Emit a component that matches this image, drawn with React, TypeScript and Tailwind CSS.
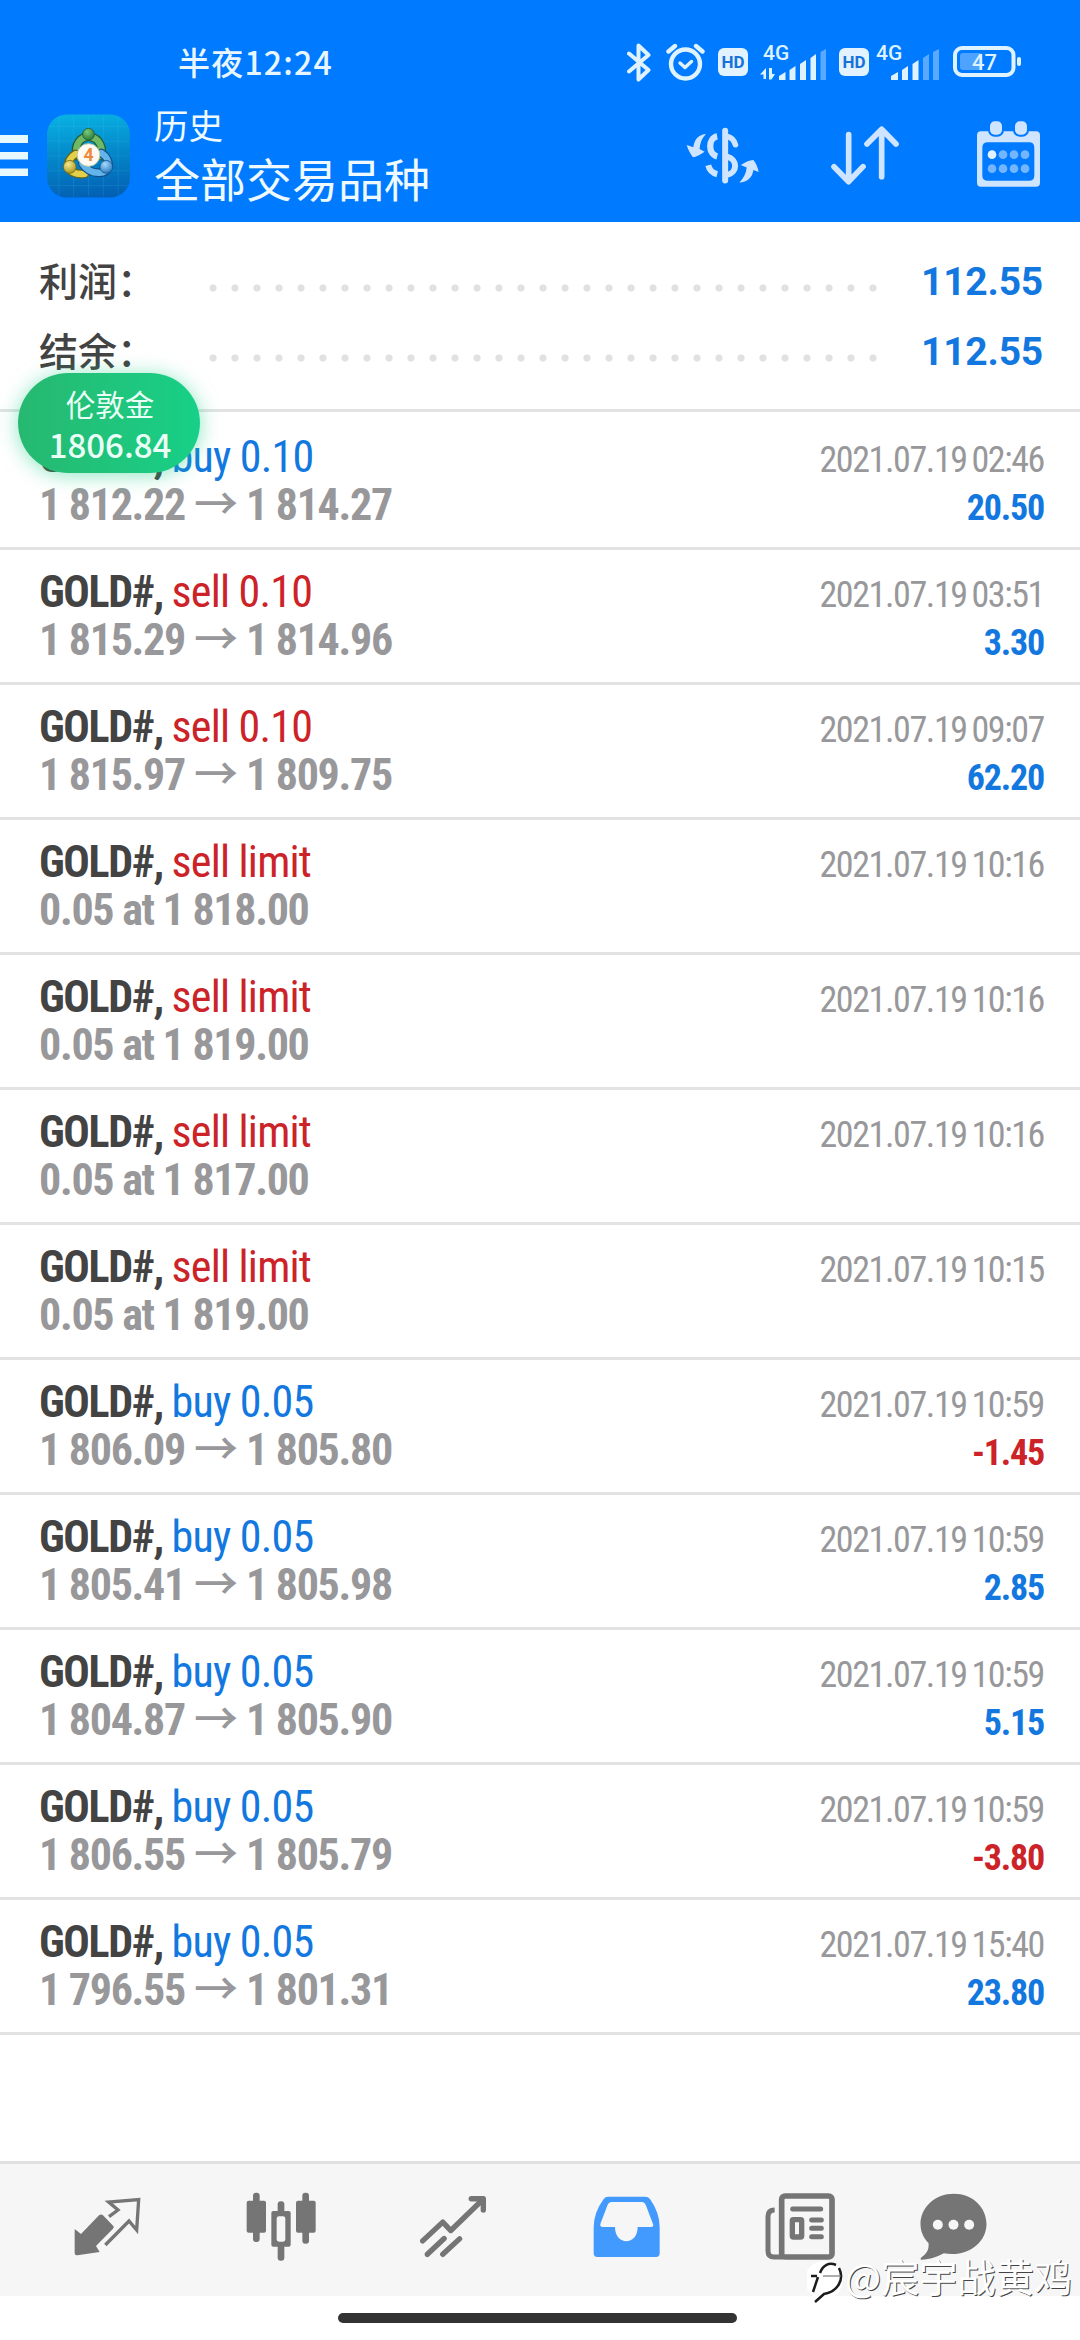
import { clsx } from 'clsx'

type Side = 'buy' | 'sell'

interface Deal {
  side: Side
  volume: string
  from?: string
  to?: string
  order?: string
  time: string
  profit?: string
}

const DEALS: Deal[] = [
  { side: 'buy', volume: '0.10', from: '1 812.22', to: '1 814.27', time: '2021.07.19 02:46', profit: '20.50' },
  { side: 'sell', volume: '0.10', from: '1 815.29', to: '1 814.96', time: '2021.07.19 03:51', profit: '3.30' },
  { side: 'sell', volume: '0.10', from: '1 815.97', to: '1 809.75', time: '2021.07.19 09:07', profit: '62.20' },
  { side: 'sell', volume: 'limit', order: '0.05 at 1 818.00', time: '2021.07.19 10:16' },
  { side: 'sell', volume: 'limit', order: '0.05 at 1 819.00', time: '2021.07.19 10:16' },
  { side: 'sell', volume: 'limit', order: '0.05 at 1 817.00', time: '2021.07.19 10:16' },
  { side: 'sell', volume: 'limit', order: '0.05 at 1 819.00', time: '2021.07.19 10:15' },
  { side: 'buy', volume: '0.05', from: '1 806.09', to: '1 805.80', time: '2021.07.19 10:59', profit: '-1.45' },
  { side: 'buy', volume: '0.05', from: '1 805.41', to: '1 805.98', time: '2021.07.19 10:59', profit: '2.85' },
  { side: 'buy', volume: '0.05', from: '1 804.87', to: '1 805.90', time: '2021.07.19 10:59', profit: '5.15' },
  { side: 'buy', volume: '0.05', from: '1 806.55', to: '1 805.79', time: '2021.07.19 10:59', profit: '-3.80' },
  { side: 'buy', volume: '0.05', from: '1 796.55', to: '1 801.31', time: '2021.07.19 15:40', profit: '23.80' },
]

const SUMMARY = [
  { label: '利润：', value: '112.55' },
  { label: '结余：', value: '112.55' },
]

function HdBadge({ className }: { className?: string }) {
  return (
    <span
      className={clsx(
        'flex h-[28px] w-[30px] items-center justify-center rounded-[6px] bg-[#e2f2ff] text-[17px] leading-none font-bold text-[#1673d8] font-[Roboto,sans-serif]',
        className
      )}
    >
      HD
    </span>
  )
}

function StatusBar() {
  return (
    <div className="flex h-[84px] items-center justify-between pt-[40px] pr-[59px] pl-[178px]">
      <span className="-mt-[3px] text-[32px] leading-[44px] font-medium tracking-[1.2px] whitespace-nowrap text-[#e8f6ff] font-[Noto_Sans_CJK_SC,sans-serif]">
        半夜12:24
      </span>
      <div className="flex items-center text-[#dff3ff]">
        <svg width="24" height="39" viewBox="0 0 24 39" fill="none" stroke="currentColor" strokeWidth="4" strokeLinejoin="round" strokeLinecap="round">
          <path d="M2 10.500 L21.500 27 L11.500 36.500 V2.500 L21.500 12 L2 28.500" />
        </svg>
        <svg className="ml-[15px]" width="39" height="38" viewBox="0 0 39 38" fill="none" stroke="currentColor" strokeWidth="4.400" strokeLinecap="round">
          <circle cx="19.500" cy="21" r="14.500" />
          <path d="M14 20 L19 24.500 L25.500 18.500" strokeWidth="3.400" strokeLinejoin="round" />
          <path d="M2.500 8.500 L9 3 M36.500 8.500 L30 3" />
        </svg>
        <HdBadge className="ml-[13px]" />
        <svg className="ml-[12px] overflow-visible" width="67" height="38" viewBox="0 0 67 38" fill="currentColor">
          <text x="3" y="17" fontSize="21" fontFamily="Roboto, sans-serif" fontWeight="500">4G</text>
          <path d="M6 36 V25 L0 31.500 H3.500 V36 Z M9 25 V36.500 H11.500 L15 31 H12 V25 Z" />
          <path d="M19 37 V33 L25.500 29 V37 Z M29.500 37 V27 L35.500 23 V37 Z M40 37 V21 L46 17 V37 Z M50.500 37 V15 L56 11 V37 Z" />
          <path d="M60.500 37 V9 L66 6 V37 Z" opacity="0.4" />
        </svg>
        <HdBadge className="ml-[12px]" />
        <svg className="ml-[7px] overflow-visible" width="63" height="38" viewBox="0 0 63 38" fill="currentColor">
          <text x="0" y="17" fontSize="21" fontFamily="Roboto, sans-serif" fontWeight="500">4G</text>
          <path d="M15 37 V33 L22 29 V37 Z M26 37 V27 L32 23 V37 Z M36.500 37 V21 L42.500 17 V37 Z" />
          <path d="M47 37 V15 L53 11 V37 Z M57 37 V9 L63 6 V37 Z" opacity="0.4" />
        </svg>
        <svg className="ml-[14px]" width="68" height="32" viewBox="0 0 68 32">
          <rect x="2" y="2" width="58.500" height="27" rx="7" fill="none" stroke="currentColor" strokeWidth="4" />
          <rect x="7" y="7" width="22" height="17" rx="3" fill="#4da3ff" />
          <rect x="64" y="11" width="4" height="9" rx="2" fill="currentColor" />
          <text x="31.500" y="23.500" textAnchor="middle" fontSize="22" fontFamily="Roboto, sans-serif" fontWeight="500" fill="currentColor">47</text>
        </svg>
      </div>
    </div>
  )
}

// Three interlocked figures around the version number
function AppLogo() {
  return (
    <svg className="mt-[1px] ml-[19px]" width="83" height="84" viewBox="0 0 84 84">
      <defs>
        <linearGradient id="logo-bg" x1="0.4" y1="0" x2="0.5" y2="1">
          <stop offset="0" stopColor="#08b0e2" />
          <stop offset="0.5" stopColor="#0486c8" />
          <stop offset="1" stopColor="#0360b4" />
        </linearGradient>
        <radialGradient id="logo-green" cx="0.4" cy="0.3" r="0.8">
          <stop offset="0" stopColor="#7ccb76" />
          <stop offset="1" stopColor="#1f6f38" />
        </radialGradient>
        <radialGradient id="logo-yellow" cx="0.4" cy="0.3" r="0.8">
          <stop offset="0" stopColor="#f5e98a" />
          <stop offset="1" stopColor="#a08c16" />
        </radialGradient>
        <radialGradient id="logo-blue" cx="0.4" cy="0.3" r="0.8">
          <stop offset="0" stopColor="#a6dafb" />
          <stop offset="1" stopColor="#1a6fb8" />
        </radialGradient>
      </defs>
      <rect width="84" height="84" rx="20" fill="url(#logo-bg)" />
      <path d="M12 2 V82 M27 1 V83 M42 1 V83 M57 1 V83 M72 2 V82 M2 12 H82 M1 27 H83 M1 42 H83 M1 57 H83 M2 72 H82" stroke="#5fd0f5" strokeOpacity="0.14" fill="none" />
      <g fill="none" strokeLinecap="round">
        <path d="M30 42 C25 16 59 16 55 42" stroke="#245c30" strokeWidth="9" />
        <path d="M30 42 C25 16 59 16 55 42" stroke="#6db966" strokeWidth="6.500" />
        <path d="M29 40 C18 46 18 62 38 60" stroke="#6b6414" strokeWidth="9" />
        <path d="M29 40 C18 46 18 62 38 60" stroke="#e2d04a" strokeWidth="6.500" />
        <path d="M55 39 C66 46 64 60 52 59 C46 59 40 56 36 50" stroke="#12508c" strokeWidth="9" />
        <path d="M55 39 C66 46 64 60 52 59 C46 59 40 56 36 50" stroke="#62b4ea" strokeWidth="6.500" />
      </g>
      <circle cx="42" cy="20" r="6" fill="url(#logo-green)" stroke="#245c30" strokeWidth="0.800" />
      <circle cx="23" cy="53" r="6.500" fill="url(#logo-yellow)" stroke="#6b6414" strokeWidth="0.800" />
      <circle cx="60" cy="53" r="6.500" fill="url(#logo-blue)" stroke="#12508c" strokeWidth="0.800" />
      <circle cx="42" cy="41" r="11.500" fill="#fffaf3" stroke="#b9c9a0" strokeWidth="1" />
      <text x="42" y="47.500" textAnchor="middle" fontSize="18" fontWeight="700" fontFamily="Roboto, sans-serif" fill="#ef8a3c">4</text>
    </svg>
  )
}

function Toolbar() {
  return (
    <div className="flex h-[138px] items-center pt-[5px] pr-[40px]">
      <svg width="28" height="42" viewBox="0 0 28 42" fill="#e8f8ff">
        <rect width="28" height="8" />
        <rect y="17" width="28" height="7.500" />
        <rect y="33.500" width="28" height="7.500" />
      </svg>
      <AppLogo />
      <div className="-mt-[4px] ml-[24px] whitespace-nowrap text-[#eefaff] font-[Noto_Sans_CJK_SC,sans-serif]">
        <div className="text-[34.500px] leading-[48px]">历史</div>
        <div className="text-[46px] leading-[59px]">全部交易品种</div>
      </div>
      <div className="ml-auto flex items-center text-[#cfe5ff]">
        <svg width="73" height="58" viewBox="76 78 220 172" fill="none" stroke="currentColor" strokeLinecap="round">
          <path d="M194 88 V238" strokeWidth="18" />
          <path d="M170 105 C142 110 142 158 170 165" strokeWidth="19" strokeLinecap="butt" />
          <path d="M143 192 C147 208 154 215 170 219" strokeWidth="18" strokeLinecap="butt" />
          <path d="M200 105 C214 108 221 115 225 130" strokeWidth="17" />
          <path d="M200 166 C232 174 232 214 200 221" strokeWidth="18" />
          <path d="M136 98 C118 99 102 110 98 138 L78 131 C82 146 90 158 97 168 C106 166 120 160 132 151 L117 143 C118 126 124 110 136 98 Z" fill="currentColor" stroke="none" />
          <path d="M237 244 C260 243 276 229 279 206 L295 212 C292 196 286 184 279 176 C266 177 254 183 241 191 L259 199 C257 218 249 232 237 244 Z" fill="currentColor" stroke="none" />
        </svg>
        <svg className="ml-[72px]" width="68" height="60" viewBox="513 78 204 180" fill="none" stroke="currentColor" strokeWidth="17" strokeLinecap="round" strokeLinejoin="round">
          <path d="M566 104 V244 M522 200 L566 245 L609 200" />
          <path d="M665 230 V90 M621 132 L665 88 L708 132" />
        </svg>
        <svg className="-mt-[3px] ml-[78px]" width="63" height="66" viewBox="951 65 189 198" fill="currentColor">
          <path fillRule="evenodd" d="M963 96 H1128 Q1140 96 1140 108 V250 Q1140 262 1128 262 H963 Q951 262 951 250 V108 Q951 96 963 96 Z M984 129 Q967 129 967 145 V229 Q967 244 984 244 H1107 Q1123 244 1123 229 V145 Q1123 129 1107 129 Z" />
          <rect x="990" y="66" width="36" height="40" rx="14" stroke="#007aff" strokeWidth="12" paintOrder="stroke" />
          <rect x="1065" y="66" width="36" height="40" rx="14" stroke="#007aff" strokeWidth="12" paintOrder="stroke" />
          <circle cx="996" cy="166" r="13" fill="#e4f3ff" />
          <g fill="#73b5ff">
            <circle cx="1029" cy="166" r="13" />
            <circle cx="1062" cy="166" r="13" />
            <circle cx="1095" cy="166" r="13" />
            <circle cx="996" cy="208" r="13" />
            <circle cx="1029" cy="208" r="13" />
            <circle cx="1062" cy="208" r="13" />
            <circle cx="1095" cy="208" r="13" />
          </g>
        </svg>
      </div>
    </div>
  )
}

function DealRow({ deal }: { deal: Deal }) {
  const loss = deal.profit?.startsWith('-')

  return (
    <div className="flex h-[135px] justify-between border-b-[3px] border-[#e3e3e4] pt-[18px] pr-[36px] pl-[39px] whitespace-nowrap font-[Roboto_Condensed,Noto_Sans_CJK_SC,sans-serif]">
      <div className="text-[44px] leading-[48px]">
        <div>
          <span className="font-bold tracking-[-1.4px] text-[#434344]">GOLD#, </span>
          <span className={clsx('tracking-[-0.8px]', deal.side === 'buy' ? 'text-[#1278e0]' : 'text-[#cb2328]')}>
            {deal.side} {deal.volume}
          </span>
        </div>
        <div className="flex font-bold tracking-[-1.3px] text-[#98989b]">
          {deal.order ?? (
            <>
              <span>{deal.from}</span>
              <span className="-mt-[4px] mr-[8px] ml-[9px] font-medium tracking-normal font-[Noto_Sans_CJK_SC,sans-serif]">→</span>
              <span>{deal.to}</span>
            </>
          )}
        </div>
      </div>
      <div className="pt-[3px] text-right text-[36px] leading-[48px] tracking-[-1.2px]">
        <div className="tracking-[-1.4px] text-[#98989b] [word-spacing:-2px]">{deal.time}</div>
        <div className={clsx('font-bold', loss ? 'text-[#cb2328]' : 'text-[#1278e0]')}>{deal.profit}</div>
      </div>
    </div>
  )
}

function TabBar() {
  return (
    <div className="flex h-[135px] items-center border-t-[3px] border-[#e0e0e0] bg-[#f6f6f6] pb-[7px] pl-[21px] text-[#757575]">
      <div className="flex w-[173px] justify-center">
        <svg width="67" height="60" viewBox="76 56 201 180" fill="currentColor">
          <path d="M78 152 L97 167 L151 111 Q157 106 163 111 L194 143 Q197 147 193 151 L142 203 L153 221 L86 231 Q78 232 78 224 Z" />
          <path d="M181 115 L208 95 L180 71 L270 64 L264 155 L241 128 L170 200" fill="none" stroke="currentColor" strokeWidth="10" />
        </svg>
      </div>
      <div className="flex w-[173px] justify-center">
        <svg width="70" height="69" viewBox="588 40 210 207" fill="currentColor">
          <rect x="609" y="42" width="20" height="148" rx="9" />
          <rect x="590" y="66" width="58" height="96" rx="6" />
          <rect x="757" y="42" width="20" height="153" rx="9" />
          <rect x="738" y="66" width="59" height="96" rx="6" />
          <rect x="683" y="68" width="20" height="178" rx="9" />
          <rect x="664" y="97" width="58" height="107" rx="6" />
          <rect x="680" y="113" width="26" height="76" rx="7" fill="#f6f6f6" />
        </svg>
      </div>
      <div className="flex w-[173px] justify-center">
        <svg width="67" height="63" viewBox="64 47 200 188" fill="none" stroke="currentColor" strokeWidth="16" strokeLinejoin="round" strokeLinecap="round">
          <path d="M72 184 L132 128 L156 153 L250 62" />
          <path d="M217 58 H253 V92" />
          <path d="M86 224 L136 177 M132 224 L182 178" />
        </svg>
      </div>
      <div className="flex w-[173px] justify-center text-[#429aff]">
        <svg width="67" height="62" viewBox="582 48 201 186" fill="currentColor">
          <path fillRule="evenodd" d="M628 50 H738 Q748 50 753 57 Q782 98 782 142 V220 Q782 231 771 231 H595 Q584 231 584 220 V142 Q584 98 614 57 Q619 50 628 50 Z M637 66 Q629 66 626 74 L604 132 Q602 141 612 141 H648 C648 198 716 198 716 141 H756 Q765 141 762 132 L740 74 Q737 66 729 66 Z" />
        </svg>
      </div>
      <div className="flex w-[173px] justify-center">
        <svg width="70" height="67" viewBox="49 40 210 201" fill="none" stroke="currentColor" strokeWidth="15">
          <rect x="99" y="49" width="151" height="183" rx="10" strokeWidth="17" />
          <path d="M78 91 Q58 91 58 110 V214 Q58 232 76 232 H104" />
          <path d="M132 88 H216 M189 121 H218 M189 146 H218 M189 171 H218" strokeLinecap="round" />
          <rect x="131" y="120" width="28" height="52" rx="3" strokeWidth="16" />
        </svg>
      </div>
      <div className="flex w-[134px] justify-center">
        <svg width="67" height="67" viewBox="509 40 200 201" fill="currentColor">
          <path d="M610 42 C665 42 708 82 708 133 C708 190 650 234 580 221 C560 232 538 240 514 240 C508 240 510 236 514 232 C530 220 536 208 534 190 C518 174 510 154 510 133 C510 82 555 42 610 42 Z" />
          <g fill="#f6f6f6">
            <circle cx="562" cy="135" r="15" />
            <circle cx="609" cy="135" r="15" />
            <circle cx="656" cy="135" r="15" />
          </g>
        </svg>
      </div>
    </div>
  )
}

function Watermark() {
  return (
    <div className="absolute top-[2246px] left-[807px] flex items-center whitespace-nowrap text-white">
      <svg className="mt-[14px]" width="38" height="46" viewBox="0 0 38 46" fill="none">
        <circle cx="17" cy="20" r="19" fill="#fff" />
        <path d="M4 16 H10 M6 32 L11 17 M13 13 C16 5 22 2 29 5 M32 8 C38 20 30 32 17 34 L8 42" stroke="#1c1c1c" strokeWidth="2.500" />
        <path d="M16 16 H34" stroke="#777" strokeWidth="1.200" />
      </svg>
      <span className="text-[38.200px] leading-[50px] font-[Noto_Sans_CJK_SC,sans-serif] [text-shadow:1px_1px_0.500px_#444]">@宸宇战黄鸡</span>
    </div>
  )
}

export default function App() {
  return (
    <div className="relative flex h-[2340px] w-[1080px] flex-col overflow-hidden bg-white">
      <header className="h-[222px] bg-[#007aff]">
        <StatusBar />
        <Toolbar />
      </header>

      <div className="h-[190px] border-b-[3px] border-[#e3e3e4] pt-[24px] pr-[37px] pl-[39px]">
        {SUMMARY.map((row) => (
          <div key={row.label} className="flex h-[70px] items-center">
            <span className="-mt-[5px] w-[163px] text-[39px] leading-[70px] font-medium text-[#434344] font-[Noto_Sans_CJK_SC,sans-serif]">
              {row.label}
            </span>
            <span className="mt-[13px] h-[8px] w-[682px] bg-[radial-gradient(circle,#e1e1e3_3.2px,transparent_4px)] bg-[length:22px_8px]" />
            <span className="mt-[1px] ml-auto text-[39px] leading-[70px] font-bold tracking-[-0.2px] text-[#1278e0] font-[Roboto,sans-serif]">
              {row.value}
            </span>
          </div>
        ))}
      </div>

      <main className="flex-1 pt-[3px]">
        {DEALS.map((deal, i) => (
          <DealRow key={i} deal={deal} />
        ))}
      </main>

      <TabBar />

      <div className="flex h-[44px] items-center justify-center pr-[6px]">
        <div className="h-[10px] w-[399px] rounded-full bg-[#333]" />
      </div>

      {/* Floating quote bubble */}
      <div className="absolute top-[373px] left-[18px] flex h-[100px] w-[182px] flex-col items-center justify-center rounded-full bg-linear-to-r from-[#26b870] to-[#17d087] pl-[2px] text-[#eafff6] shadow-[0_2px_20px_rgba(23,208,135,0.5)]">
        <span className="text-[29.500px] leading-[42px] font-[Noto_Sans_CJK_SC,sans-serif]">伦敦金</span>
        <span className="text-[33px] leading-[40px] font-medium font-[Noto_Sans_CJK_SC,sans-serif]">1806.84</span>
      </div>

      <Watermark />
    </div>
  )
}
